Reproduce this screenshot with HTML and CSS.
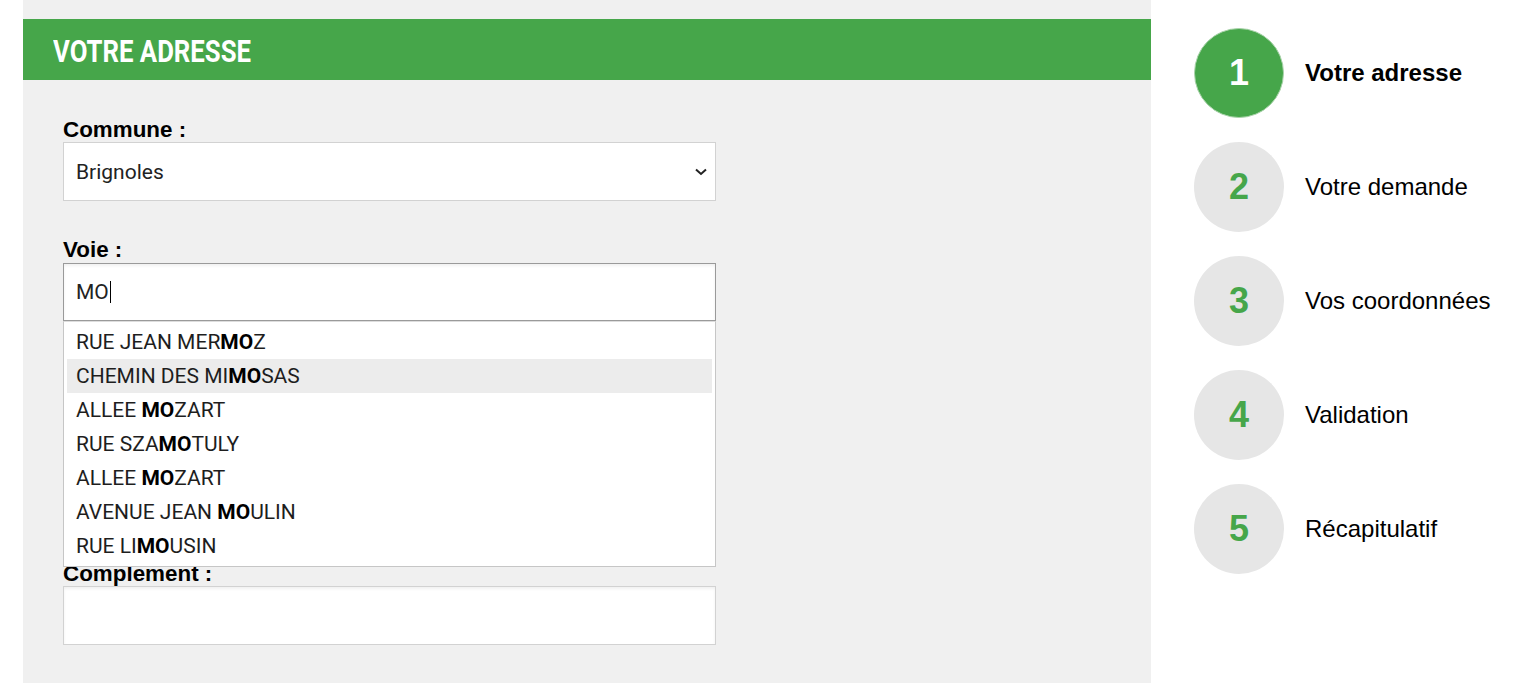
FILE: index.html
```html
<!DOCTYPE html>
<html lang="fr">
<head>
<meta charset="utf-8">
<title>Votre adresse</title>
<link rel="stylesheet" href="styles.css">
</head>
<body>
<div class="page">
  <main class="panel">
    <header class="panel-head"><h1 class="panel-title">VOTRE ADRESSE</h1></header>
    <form class="form">
      <div class="field">
        <label class="label">Commune :</label>
        <div class="control select">
          <span class="value">Brignoles</span>
          <svg class="chevron" width="12" height="8" viewBox="0 0 12 8"><path d="M1 1.5 L6 6 L11 1.5" fill="none" stroke="#222" stroke-width="2"/></svg>
        </div>
      </div>
      <div class="field field-voie">
        <label class="label">Voie :</label>
        <div class="control input focused"><span class="value">MO</span><span class="caret"></span></div>
        <ul class="suggest">
          <li class="item">RUE JEAN MER<b>MO</b>Z</li>
          <li class="item active">CHEMIN DES MI<b>MO</b>SAS</li>
          <li class="item">ALLEE <b>MO</b>ZART</li>
          <li class="item">RUE SZA<b>MO</b>TULY</li>
          <li class="item">ALLEE <b>MO</b>ZART</li>
          <li class="item">AVENUE JEAN <b>MO</b>ULIN</li>
          <li class="item">RUE LI<b>MO</b>USIN</li>
        </ul>
      </div>
      <div class="field field-complement">
        <label class="label">Complement :</label>
        <div class="control input"></div>
      </div>
    </form>
  </main>
  <aside class="steps">
    <div class="step current"><div class="circle">1</div><div class="step-label">Votre adresse</div></div>
    <div class="step"><div class="circle">2</div><div class="step-label">Votre demande</div></div>
    <div class="step"><div class="circle">3</div><div class="step-label">Vos coordonnées</div></div>
    <div class="step"><div class="circle">4</div><div class="step-label">Validation</div></div>
    <div class="step"><div class="circle">5</div><div class="step-label">Récapitulatif</div></div>
  </aside>
</div>
</body>
</html>
```
FILE: styles.css
```css
* { box-sizing: border-box; }
html, body { margin: 0; padding: 0; background: #fff; }
body { font-family: "Liberation Sans", Arial, sans-serif; color: #000; overflow: hidden; }

.page { display: flex; align-items: stretch; min-height: 683px; }

.panel {
  margin-left: 23px;
  width: 1128px;
  background: #f0f0f0;
  padding-top: 19px;
  min-height: 683px;
}
.panel-head {
  height: 61px;
  background: #46a64a;
  padding: 3px 0 0 30px;
  display: flex;
  align-items: center;
}
.panel-title {
  margin: 0;
  font-family: Roboto, sans-serif;
  font-weight: 700;
  font-size: 31px;
  color: #fff;
  display: inline-block;
  transform: scaleX(0.83);
  transform-origin: left center;
  white-space: nowrap;
}

.form { padding: 37px 0 0 40px; width: 693px; }
.field { position: relative; margin-bottom: 36px; }
.label {
  display: block;
  font-weight: 700;
  font-size: 22.4px;
  line-height: 25px;
  height: 25px;
}
.control {
  background: #fff;
  border: 1px solid #d2d2d2;
  height: 59px;
  display: flex;
  align-items: center;
  padding: 0 8px 0 12px;
  font-family: Roboto, sans-serif;
  font-size: 21px;
  color: #222;
}
.select { justify-content: space-between; }
.input { box-shadow: inset 0 2px 3px rgba(0,0,0,0.06); }
.field-voie .input { margin-top: 1px; height: 58px; border-color: #9a9a9a; }
.caret { display: inline-block; width: 1px; height: 22px; background: #000; margin-left: 1px; }

.suggest {
  position: absolute;
  left: 0; right: 0;
  top: 100%;
  margin: 0;
  padding: 3px;
  list-style: none;
  background: #fff;
  border: 1px solid #c6c6c6;
  border-top-color: #ddd;
  z-index: 5;
  font-family: Roboto, sans-serif;
  font-size: 21px;
  color: #1e1e1e;
}
.item { height: 34px; line-height: 34px; padding-left: 9px; white-space: nowrap; }
.item b { font-weight: 700; color: #000; }
.item.active { background: #ececec; }

.field-voie { margin-bottom: 240px; }
.field-complement { margin-bottom: 0; }

.steps {
  display: flex;
  flex-direction: column;
  gap: 24px;
  padding: 28px 0 0 43px;
}
.step { display: flex; align-items: center; gap: 21px; }
.circle {
  width: 90px; height: 90px;
  border-radius: 50%;
  background: #e6e6e6;
  color: #46a64a;
  font-weight: 700;
  font-size: 36px;
  display: flex; align-items: center; justify-content: center;
}
.step.current .circle { background: #46a64a; color: #fff; border: 1px solid #a9d3aa; }
.step-label { font-size: 24px; }
.step.current .step-label { font-weight: 700; }
```
